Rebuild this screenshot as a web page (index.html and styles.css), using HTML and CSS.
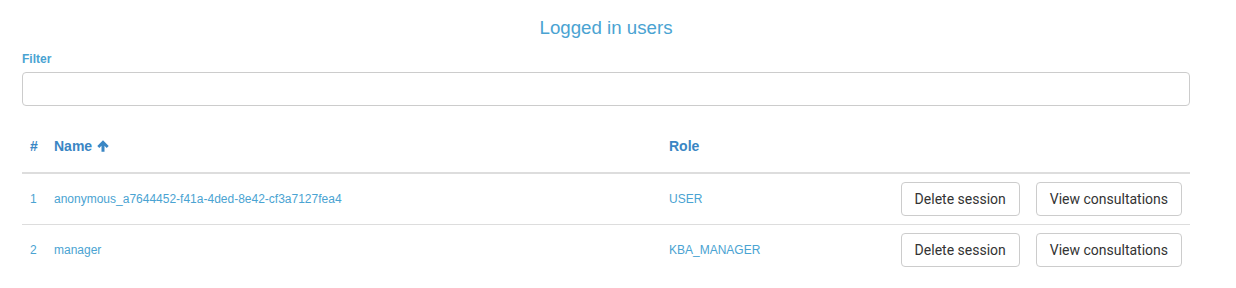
FILE: index.html
```html
<!DOCTYPE html>
<html>
<head>
  <title>Logged in users</title>
  <link rel="stylesheet" href="styles.css">
</head>
<body>
  <div class="page">
    <h1 class="title">Logged in users</h1>

    <div class="filter">
      <label for="filter">Filter</label>
      <input type="text" id="filter">
    </div>

    <table class="users">
      <thead>
        <tr>
          <th class="col-num">#</th>
          <th class="col-name">Name
            <svg class="sort" viewBox="0 0 12 12" width="12" height="12">
              <path d="M6 0.3 L11.7 6 L9.7 8 L7.5 5.8 L7.5 11.7 L4.5 11.7 L4.5 5.8 L2.3 8 L0.3 6 Z" fill="currentColor"/>
            </svg>
          </th>
          <th class="col-role">Role</th>
          <th class="col-actions"></th>
        </tr>
      </thead>
      <tbody>
        <tr>
          <td>1</td>
          <td>anonymous_a7644452-f41a-4ded-8e42-cf3a7127fea4</td>
          <td>USER</td>
          <td>
            <div class="actions">
              <button class="btn">Delete session</button>
              <button class="btn">View consultations</button>
            </div>
          </td>
        </tr>
        <tr>
          <td>2</td>
          <td>manager</td>
          <td>KBA_MANAGER</td>
          <td>
            <div class="actions">
              <button class="btn">Delete session</button>
              <button class="btn">View consultations</button>
            </div>
          </td>
        </tr>
      </tbody>
    </table>
  </div>
</body>
</html>
```

FILE: styles.css
```css
body {
  margin: 0;
  font-family: "Liberation Sans", Arial, sans-serif;
  background: #fff;
}

.page {
  width: 1168px;
  margin-left: 22px;
}

.title {
  margin: 0;
  padding-top: 17px;
  height: 23px;
  text-align: center;
  font-size: 18.7px;
  font-weight: normal;
  line-height: 22px;
  color: #4aa3d2;
}

.filter {
  margin-top: 12px;
}

.filter label {
  display: block;
  font-size: 12px;
  font-weight: bold;
  line-height: 14px;
  color: #4aa3d2;
  margin-bottom: 6px;
}

.filter input {
  display: block;
  box-sizing: border-box;
  width: 100%;
  height: 34px;
  border: 1px solid #ccc;
  border-radius: 4px;
  padding: 6px 12px;
  font-size: 14px;
  outline: none;
}

.users {
  width: 100%;
  margin-top: 14px;
  border-collapse: collapse;
  table-layout: fixed;
}

.users th {
  text-align: left;
  font-size: 14px;
  font-weight: bold;
  line-height: 20px;
  color: #3a86c4;
  padding: 16px 8px;
  border-bottom: 2px solid #ddd;
}

.users .col-num {
  width: 8px;
}

.users .col-name {
  width: 599px;
}

.users .col-role {
  width: 200px;
}

.sort {
  vertical-align: -1px;
  margin-left: 1px;
}

.users td {
  font-size: 12px;
  line-height: 20px;
  color: #4aa3d2;
  padding: 8px;
  border-bottom: 1px solid #ddd;
  vertical-align: middle;
}

.users tbody tr:last-child td {
  border-bottom: none;
}

.actions {
  display: flex;
  justify-content: flex-end;
  gap: 16px;
}

.btn {
  flex-shrink: 0;
  white-space: nowrap;
  font-family: Roboto, sans-serif;
  font-size: 14px;
  line-height: 20px;
  color: #333;
  background: #fff;
  border: 1px solid #ccc;
  border-radius: 4px;
  padding: 6px 13px;
  height: 34px;
  cursor: pointer;
}
```
